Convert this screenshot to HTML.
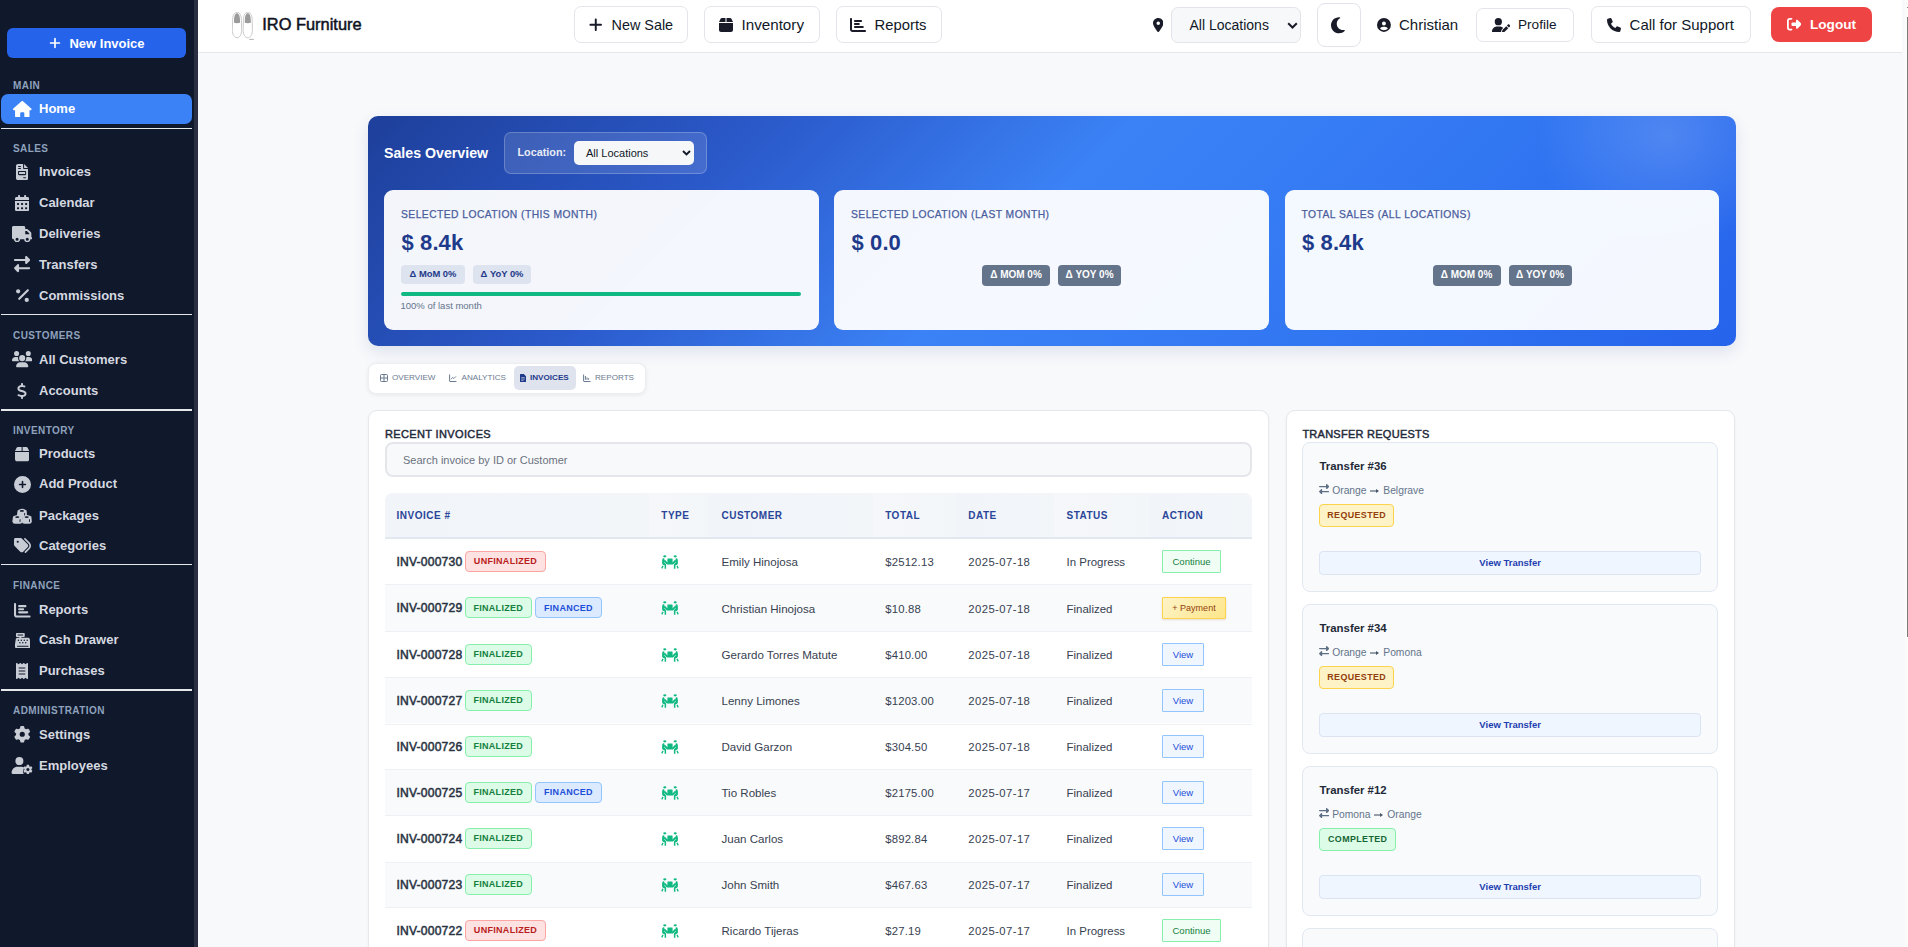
<!DOCTYPE html><html><head><meta charset="utf-8"><style>
*{box-sizing:border-box;margin:0;padding:0}
html,body{width:1908px;height:947px;overflow:hidden;background:#f8f9fb;font-family:"Liberation Sans", sans-serif}
.abs{position:absolute}
#sb{position:absolute;left:0;top:0;width:194px;height:947px;background:#10182b}
#sbtrack{position:absolute;left:194px;top:0;width:4px;height:947px;background:#2a2f42}
.sbl{position:absolute;left:13px;font-size:10px;font-weight:700;letter-spacing:.42px;color:#8ea2bd;line-height:12px}
.sbi{position:absolute;left:1px;width:191px;height:30px;color:#d5d9e0;font-size:13px;font-weight:700;line-height:30px}
.sbi .ic{position:absolute;left:10.3px;top:0;height:30px;width:22px;display:flex;align-items:center;justify-content:center;color:#c7ccd5}
.sbi .tx{position:absolute;left:38px;top:0}
.sep{position:absolute;left:1px;width:191px;height:1.6px;background:#e5e7eb}
#top{position:absolute;left:198px;top:0;width:1704px;height:53px;background:#fff;border-bottom:1px solid #e5e7eb}
.tbtn{position:absolute;height:36px;border:1px solid #e2e4e9;border-radius:7px;background:#fff;color:#111827;font-size:14.4px;display:flex;align-items:center}
</style></head><body>
<div id="sb">
<div class="abs" style="left:7px;top:28px;width:179px;height:30px;background:#2563eb;border-radius:6px;color:#fff;font-size:13px;font-weight:700;display:flex;align-items:center;justify-content:center;gap:8px;padding-left:1px"><svg width="12" height="12" viewBox="0 0 16 16" style="display:block;"><path d="M8 2v12M2 8h12" stroke="currentColor" stroke-width="2.2" stroke-linecap="round"/></svg><span>New Invoice</span></div>
<div class="sbl" style="top:79.5px">MAIN</div>
<div class="sbi" style="top:94px;background:#3b82f6;border-radius:7px;color:#fff;"><div class="ic" style="color:#fff;"><svg width="18.56" height="16.5" viewBox="0 0 576 512" style="display:block;"><path d="M575.8 255.5c0 18-15 32.1-32 32.1h-32l.7 160.2c0 2.7-.2 5.4-.5 8.1V472c0 22.1-17.9 40-40 40H456c-1.1 0-2.2 0-3.3-.1c-1.4 .1-2.8 .1-4.2 .1H416 392c-22.1 0-40-17.9-40-40V448 384c0-17.7-14.3-32-32-32H256c-17.7 0-32 14.3-32 32v64 24c0 22.1-17.9 40-40 40H160 128.1c-1.5 0-3-.1-4.5-.2c-1.2 .1-2.4 .2-3.6 .2H104c-22.1 0-40-17.9-40-40V360c0-.9 0-1.9 .1-2.8V287.6H32c-18 0-32-14-32-32.1c0-9 3-17 10-24L266.4 8c7-7 15-8 22-8s15 2 21 7L564.8 231.5c8 7 12 15 11 24z" fill="currentColor"/></svg></div><div class="tx">Home</div></div>
<div class="sep" style="top:127.7px"></div>
<div class="sbl" style="top:143px">SALES</div>
<div class="sbi" style="top:157px;"><div class="ic" style=""><svg width="12.15" height="16.2" viewBox="0 0 384 512" style="display:block;"><path d="M64 0C28.7 0 0 28.7 0 64V448c0 35.3 28.7 64 64 64H320c35.3 0 64-28.7 64-64V160H256c-17.7 0-32-14.3-32-32V0H64zM256 0V128H384L256 0zM80 64h64c8.8 0 16 7.2 16 16s-7.2 16-16 16H80c-8.8 0-16-7.2-16-16s7.2-16 16-16zm0 64h64c8.8 0 16 7.2 16 16s-7.2 16-16 16H80c-8.8 0-16-7.2-16-16s7.2-16 16-16zm16 96H288c17.7 0 32 14.3 32 32v64c0 17.7-14.3 32-32 32H96c-17.7 0-32-14.3-32-32V256c0-17.7 14.3-32 32-32zm0 32v64H288V256H96zM240 416h64c8.8 0 16 7.2 16 16s-7.2 16-16 16H240c-8.8 0-16-7.2-16-16s7.2-16 16-16z" fill="currentColor"/></svg></div><div class="tx">Invoices</div></div>
<div class="sbi" style="top:188px;"><div class="ic" style=""><svg width="14.17" height="16.2" viewBox="0 0 448 512" style="display:block;"><path d="M128 0c17.7 0 32 14.3 32 32V64H288V32c0-17.7 14.3-32 32-32s32 14.3 32 32V64h48c26.5 0 48 21.5 48 48v48H0V112C0 85.5 21.5 64 48 64H96V32c0-17.7 14.3-32 32-32zM0 192H448V464c0 26.5-21.5 48-48 48H48c-26.5 0-48-21.5-48-48V192zm64 80v32c0 8.8 7.2 16 16 16h32c8.8 0 16-7.2 16-16V272c0-8.8-7.2-16-16-16H80c-8.8 0-16 7.2-16 16zm128 0v32c0 8.8 7.2 16 16 16h32c8.8 0 16-7.2 16-16V272c0-8.8-7.2-16-16-16H208c-8.8 0-16 7.2-16 16zm144-16c-8.8 0-16 7.2-16 16v32c0 8.8 7.2 16 16 16h32c8.8 0 16-7.2 16-16V272c0-8.8-7.2-16-16-16H336zM64 400v32c0 8.8 7.2 16 16 16h32c8.8 0 16-7.2 16-16V400c0-8.8-7.2-16-16-16H80c-8.8 0-16 7.2-16 16zm144-16c-8.8 0-16 7.2-16 16v32c0 8.8 7.2 16 16 16h32c8.8 0 16-7.2 16-16V400c0-8.8-7.2-16-16-16H208zm112 16v32c0 8.8 7.2 16 16 16h32c8.8 0 16-7.2 16-16V400c0-8.8-7.2-16-16-16H336c-8.8 0-16 7.2-16 16z" fill="currentColor"/></svg></div><div class="tx">Calendar</div></div>
<div class="sbi" style="top:219px;"><div class="ic" style=""><svg width="20.38" height="16.3" viewBox="0 0 640 512" style="display:block;"><path d="M48 0C21.5 0 0 21.5 0 48V368c0 26.5 21.5 48 48 48H64c0 53 43 96 96 96s96-43 96-96H384c0 53 43 96 96 96s96-43 96-96h32c17.7 0 32-14.3 32-32s-14.3-32-32-32V288 256 237.3c0-17-6.7-33.3-18.7-45.3L512 114.7c-12-12-28.3-18.7-45.3-18.7H416V48c0-26.5-21.5-48-48-48H48zM416 160h50.7L544 237.3V256H416V160zM112 416a48 48 0 1 1 96 0 48 48 0 1 1 -96 0zm368-48a48 48 0 1 1 0 96 48 48 0 1 1 0-96z" fill="currentColor"/></svg></div><div class="tx">Deliveries</div></div>
<div class="sbi" style="top:249.5px;"><div class="ic" style=""><svg width="16.2" height="16.2" viewBox="0 0 512 512" style="display:block;"><path d="M32 96l320 0V32c0-12.9 7.8-24.6 19.8-29.6s25.7-2.2 34.9 6.9l96 96c6 6 9.4 14.1 9.4 22.6s-3.4 16.6-9.4 22.6l-96 96c-9.200 9.2-22.9 11.9-34.9 6.9s-19.8-16.6-19.8-29.6V160L32 160c-17.7 0-32-14.3-32-32s14.3-32 32-32zM480 352c17.7 0 32 14.3 32 32s-14.3 32-32 32H160v64c0 12.9-7.8 24.6-19.8 29.6s-25.7 2.2-34.9-6.9l-96-96c-6-6-9.4-14.1-9.4-22.6s3.4-16.6 9.4-22.6l96-96c9.2-9.2 22.9-11.9 34.9-6.9s19.8 16.6 19.8 29.6l0 64H480z" fill="currentColor"/></svg></div><div class="tx">Transfers</div></div>
<div class="sbi" style="top:280.5px;"><div class="ic" style=""><svg width="12.9" height="17.2" viewBox="0 0 384 512" style="display:block;"><path d="M374.6 118.6c12.5-12.5 12.5-32.8 0-45.3s-32.8-12.5-45.3 0l-256 256c-12.5 12.5-12.5 32.8 0 45.3s32.8 12.5 45.3 0l256-256zM128 128A64 64 0 1 0 0 128a64 64 0 1 0 128 0zM384 384a64 64 0 1 0 -128 0 64 64 0 1 0 128 0z" fill="currentColor"/></svg></div><div class="tx">Commissions</div></div>
<div class="sep" style="top:313.7px"></div>
<div class="sbl" style="top:329.5px">CUSTOMERS</div>
<div class="sbi" style="top:344.5px;"><div class="ic" style=""><svg width="20.38" height="16.3" viewBox="0 0 640 512" style="display:block;"><path d="M144 0a80 80 0 1 1 0 160A80 80 0 1 1 144 0zM512 0a80 80 0 1 1 0 160A80 80 0 1 1 512 0zM0 298.7C0 239.8 47.8 192 106.7 192h42.7c15.9 0 31 3.5 44.6 9.7c-1.3 7.2-1.9 14.7-1.9 22.3c0 38.2 16.8 72.5 43.3 96c-.2 0-.4 0-.7 0H21.3C9.6 320 0 310.4 0 298.7zM405.3 320c-.2 0-.4 0-.7 0c26.6-23.5 43.3-57.8 43.3-96c0-7.6-.7-15-1.9-22.3c13.6-6.3 28.7-9.7 44.6-9.7h42.7C592.2 192 640 239.8 640 298.7c0 11.8-9.6 21.3-21.3 21.3H405.3zM224 224a96 96 0 1 1 192 0 96 96 0 1 1 -192 0zM128 485.3C128 411.7 187.7 352 261.3 352H378.7C452.3 352 512 411.7 512 485.3c0 14.7-11.9 26.7-26.7 26.7H154.7c-14.7 0-26.7-11.9-26.7-26.7z" fill="currentColor"/></svg></div><div class="tx">All Customers</div></div>
<div class="sbi" style="top:375.5px;"><div class="ic" style=""><svg width="10.0" height="16" viewBox="0 0 320 512" style="display:block;"><path d="M160 0c17.7 0 32 14.3 32 32V67.7c1.6 .2 3.1 .4 4.7 .7c.4 .1 .7 .1 1.1 .2l48 8.8c17.4 3.2 28.9 19.900 25.7 37.2s-19.9 28.9-37.2 25.7l-47.5-8.7c-31.3-4.6-58.9-1.5-78.3 6.2s-27.2 18.3-29 28.1c-2 10.7-.5 16.7 1.2 20.4c1.8 3.9 5.5 8.3 12.8 13.2c16.3 10.7 41.3 17.7 73.7 26.3l2.9 .8c28.6 7.6 63.6 16.8 89.6 33.8c14.2 9.3 27.6 21.9 35.9 39.5c8.5 17.9 10.3 37.9 6.4 59.2c-6.9 38-33.1 63.4-65.6 76.7c-13.7 5.6-28.6 9.2-44.4 11V480c0 17.7-14.3 32-32 32s-32-14.3-32-32V445.1c-.4-.1-.9-.1-1.3-.2l-.2 0 0 0c-24.4-3.800-64.5-14.3-91.5-26.3c-16.1-7.2-23.4-26.1-16.2-42.2s26.1-23.4 42.2-16.2c20.9 9.3 55.3 18.5 75.2 21.6c31.9 4.7 58.2 2 76-5.3c16.9-6.9 24.6-16.9 26.8-28.9c1.9-10.6 .4-16.7-1.3-20.4c-1.9-4-5.6-8.4-13-13.3c-16.4-10.7-41.5-17.7-74-26.3l-2.8-.7 0 0C119.4 279.3 84.4 270 58.4 253c-14.2-9.3-27.5-22-35.8-39.6c-8.4-17.9-10.1-37.9-6.1-59.2C23.7 116 52.3 91.2 84.8 78.3c13.3-5.3 27.9-8.9 43.2-11V32c0-17.7 14.3-32 32-32z" fill="currentColor"/></svg></div><div class="tx">Accounts</div></div>
<div class="sep" style="top:409.2px"></div>
<div class="sbl" style="top:424.5px">INVENTORY</div>
<div class="sbi" style="top:438.7px;"><div class="ic" style=""><svg width="14.26" height="16.3" viewBox="0 0 448 512" style="display:block;"><path d="M50.7 58.5L0 160H208V32H93.7C75.5 32 58.9 42.3 50.7 58.5zM240 160H448L397.3 58.5C389.1 42.3 372.5 32 354.3 32H240V160zm208 32H0V416c0 35.3 28.7 64 64 64H384c35.3 0 64-28.7 64-64V192z" fill="currentColor"/></svg></div><div class="tx">Products</div></div>
<div class="sbi" style="top:469px;"><div class="ic" style=""><svg width="17.0" height="17" viewBox="0 0 512 512" style="display:block;"><path d="M256 512A256 256 0 1 0 256 0a256 256 0 1 0 0 512zM232 344V280H168c-13.3 0-24-10.7-24-24s10.7-24 24-24h64V168c0-13.3 10.7-24 24-24s24 10.7 24 24v64h64c13.3 0 24 10.7 24 24s-10.7 24-24 24H280v64c0 13.3-10.7 24-24 24s-24-10.7-24-24z" fill="currentColor"/></svg></div><div class="tx">Add Product</div></div>
<div class="sbi" style="top:500.5px;"><div class="ic" style=""><svg width="20" height="16" viewBox="0 0 20 16" style="display:block;"><path d="M5.6 2.4000000000000004Q10.1 -0.8 14.6 2.4000000000000004L15.0 7.2Q14.799999999999999 9.399999999999999 12.6 9.6L7.6 9.6Q5.199999999999999 9.399999999999999 5.0 7.2Z" fill="currentColor"/><ellipse cx="9.899999999999999" cy="2.9000000000000004" rx="2.1" ry=".85" fill="#10182b"/><path d="M12.2 5.2l.9-.5v2.8l-.9.5z" fill="#10182b"/><path d="M1 8.600000000000001Q5.5 5.4 10 8.600000000000001L10.4 13.4Q10.2 15.6 8 15.8L3 15.8Q0.6 15.6 0.4 13.4Z" fill="currentColor"/><ellipse cx="5.3" cy="9.100000000000001" rx="2.1" ry=".85" fill="#10182b"/><path d="M7.6 11.4l.9-.5v2.8l-.9.5z" fill="#10182b"/><path d="M10.4 8.600000000000001Q14.9 5.4 19.4 8.600000000000001L19.8 13.4Q19.6 15.6 17.4 15.8L12.4 15.8Q10.0 15.6 9.8 13.4Z" fill="currentColor"/><ellipse cx="14.7" cy="9.100000000000001" rx="2.1" ry=".85" fill="#10182b"/><path d="M17.0 11.4l.9-.5v2.8l-.9.5z" fill="#10182b"/></svg></div><div class="tx">Packages</div></div>
<div class="sbi" style="top:530.5px;"><div class="ic" style=""><svg width="17.0" height="17" viewBox="0 0 512 512" style="display:block;"><path d="M345 39.1L472.8 168.4c52.4 53 52.4 138.2 0 191.2L360.8 472.9c-9.3 9.4-24.5 9.5-33.9 .2s-9.5-24.5-.2-33.9L438.6 325.9c33.9-34.3 33.9-89.4 0-123.7L310.9 72.9c-9.3-9.4-9.2-24.6 .2-33.9s24.6-9.2 33.9 .2zM0 229.5V80C0 53.5 21.5 32 48 32H197.5c17 0 33.3 6.7 45.3 18.7l168 168c25 25 25 65.5 0 90.5L277.3 442.7c-25 25-65.5 25-90.5 0l-168-168C6.7 262.7 0 246.5 0 229.5zM144 144a32 32 0 1 0 -64 0 32 32 0 1 0 64 0z" fill="currentColor"/></svg></div><div class="tx">Categories</div></div>
<div class="sep" style="top:563.7px"></div>
<div class="sbl" style="top:579.5px">FINANCE</div>
<div class="sbi" style="top:594.8px;"><div class="ic" style=""><svg width="16.6" height="16.6" viewBox="0 0 512 512" style="display:block;"><path d="M32 32c17.7 0 32 14.3 32 32V400c0 8.8 7.2 16 16 16H480c17.7 0 32 14.3 32 32s-14.3 32-32 32H80c-44.2 0-80-35.8-80-80V64C0 46.3 14.3 32 32 32zm96 96c0-17.7 14.3-32 32-32l192 0c17.7 0 32 14.3 32 32s-14.3 32-32 32l-192 0c-17.7 0-32-14.3-32-32zm32 64H280c17.7 0 32 14.3 32 32s-14.3 32-32 32H160c-17.7 0-32-14.3-32-32s14.3-32 32-32zm0 96H408c17.7 0 32 14.3 32 32s-14.3 32-32 32H160c-17.7 0-32-14.3-32-32s14.3-32 32-32z" fill="currentColor"/></svg></div><div class="tx">Reports</div></div>
<div class="sbi" style="top:625.3px;"><div class="ic" style=""><svg width="15.6" height="15.6" viewBox="0 0 512 512" style="display:block;"><path d="M64 0C46.3 0 32 14.3 32 32V96c0 17.7 14.3 32 32 32h80v32H87c-31.6 0-58.5 23.1-63.3 54.4L1.1 364.1C.4 368.8 0 373.6 0 378.4V448c0 35.3 28.7 64 64 64H448c35.3 0 64-28.7 64-64V378.4c0-4.8-.4-9.6-1.1-14.4L488.2 214.4C483.5 183.1 456.6 160 425 160H208V128h80c17.7 0 32-14.3 32-32V32c0-17.7-14.3-32-32-32H64zM96 48H256c8.8 0 16 7.2 16 16s-7.2 16-16 16H96c-8.8 0-16-7.2-16-16s7.2-16 16-16zM64 432c0-8.8 7.2-16 16-16H432c8.8 0 16 7.2 16 16s-7.2 16-16 16H80c-8.8 0-16-7.2-16-16zm48-168a24 24 0 1 1 0-48 24 24 0 1 1 0 48zm120-24a24 24 0 1 1 -48 0 24 24 0 1 1 48 0zM160 344a24 24 0 1 1 0-48 24 24 0 1 1 0 48zM328 240a24 24 0 1 1 -48 0 24 24 0 1 1 48 0zM256 344a24 24 0 1 1 0-48 24 24 0 1 1 0 48zM424 240a24 24 0 1 1 -48 0 24 24 0 1 1 48 0zM352 344a24 24 0 1 1 0-48 24 24 0 1 1 0 48z" fill="currentColor"/></svg></div><div class="tx">Cash Drawer</div></div>
<div class="sbi" style="top:655.8px;"><div class="ic" style=""><svg width="12.0" height="16" viewBox="0 0 384 512" style="display:block;"><path d="M14 2.2C22.5-1.7 32.5-.3 39.6 5.8L80 40.4 120.4 5.8c9-7.7 22.3-7.7 31.2 0L192 40.4 232.4 5.8c9-7.7 22.3-7.7 31.2 0L304 40.4 344.4 5.8c7.1-6.1 17.1-7.5 25.6-3.6s14 12.4 14 21.8V488c0 9.4-5.5 17.9-14 21.8s-18.5 2.5-25.6-3.6L304 471.6l-40.4 34.6c-9 7.7-22.3 7.7-31.2 0L192 471.6l-40.4 34.6c-9 7.7-22.3 7.7-31.2 0L80 471.6 39.6 506.2c-7.1 6.1-17.1 7.5-25.6 3.6S0 497.4 0 488V24C0 14.6 5.5 6.1 14 2.2zM96 144c-8.8 0-16 7.2-16 16s7.2 16 16 16H288c8.8 0 16-7.2 16-16s-7.2-16-16-16H96zM80 352c0 8.8 7.2 16 16 16H288c8.8 0 16-7.2 16-16s-7.2-16-16-16H96c-8.8 0-16 7.2-16 16zM96 240c-8.8 0-16 7.2-16 16s7.2 16 16 16H288c8.8 0 16-7.2 16-16s-7.2-16-16-16H96z" fill="currentColor"/></svg></div><div class="tx">Purchases</div></div>
<div class="sep" style="top:689.2px"></div>
<div class="sbl" style="top:705px">ADMINISTRATION</div>
<div class="sbi" style="top:719.7px;"><div class="ic" style=""><svg width="16.5" height="16.5" viewBox="0 0 512 512" style="display:block;"><path d="M495.9 166.6c3.2 8.7 .5 18.4-6.4 24.6l-43.3 39.4c1.1 8.3 1.7 16.8 1.7 25.4s-.6 17.1-1.7 25.4l43.3 39.4c6.9 6.2 9.6 15.9 6.4 24.6c-4.4 11.9-9.7 23.3-15.8 34.3l-4.7 8.1c-6.6 11-14 21.4-22.1 31.2c-5.9 7.2-15.7 9.6-24.5 6.8l-55.7-17.7c-13.4 10.3-28.2 18.9-44 25.4l-12.5 57.1c-2 9.1-9 16.3-18.2 17.8c-13.8 2.3-28 3.5-42.5 3.5s-28.7-1.2-42.5-3.5c-9.2-1.5-16.2-8.7-18.2-17.8l-12.5-57.1c-15.8-6.5-30.6-15.1-44-25.4L83.1 425.9c-8.8 2.8-18.6 .3-24.5-6.8c-8.1-9.8-15.5-20.2-22.1-31.2l-4.7-8.1c-6.1-11-11.4-22.4-15.8-34.3c-3.2-8.7-.5-18.4 6.4-24.6l43.3-39.4C64.6 273.1 64 264.6 64 256s.6-17.1 1.7-25.4L22.4 191.2c-6.9-6.2-9.6-15.9-6.4-24.6c4.4-11.9 9.7-23.3 15.8-34.3l4.7-8.1c6.6-11 14-21.4 22.1-31.2c5.9-7.2 15.7-9.6 24.5-6.8l55.7 17.7c13.4-10.3 28.2-18.9 44-25.4l12.5-57.1c2-9.1 9-16.3 18.2-17.8C227.3 1.2 241.5 0 256 0s28.7 1.2 42.5 3.5c9.2 1.5 16.2 8.7 18.2 17.8l12.5 57.1c15.8 6.5 30.6 15.1 44 25.4l55.7-17.7c8.8-2.8 18.6-.3 24.5 6.8c8.1 9.8 15.5 20.2 22.1 31.2l4.7 8.1c6.1 11 11.4 22.4 15.8 34.3zM256 336a80 80 0 1 0 0-160 80 80 0 1 0 0 160z" fill="currentColor"/></svg></div><div class="tx">Settings</div></div>
<div class="sbi" style="top:750.8px;"><div class="ic" style=""><svg width="22" height="17" viewBox="0 0 22 17" style="display:block;"><circle cx="8.4" cy="4.1" r="4" fill="currentColor"/><path d="M0.6 15.8c0-3.3 2.6-6 5.9-6h3.8c1.2 0 2.3.3 3.2.9-.9 1-1.4 2.3-1.4 3.7 0 1 .2 1.9.7 2.6H1.6c-.6 0-1-.5-1-1.2z" fill="currentColor"/><path d="M15.57 9.16 L15.76 7.84 L18.04 7.84 L18.23 9.16 L19.04 9.63 L20.28 9.14 L21.42 11.10 L20.37 11.94 L20.37 12.86 L21.42 13.70 L20.28 15.66 L19.04 15.17 L18.23 15.64 L18.04 16.96 L15.76 16.96 L15.57 15.64 L14.76 15.17 L13.52 15.66 L12.38 13.70 L13.43 12.86 L13.43 11.94 L12.38 11.10 L13.52 9.14 L14.76 9.63Z" fill="currentColor"/><circle cx="16.9" cy="12.4" r="1.5" fill="#10182b"/></svg></div><div class="tx">Employees</div></div>
</div><div id="sbtrack"></div>
<div id="top"></div>
<div class="abs" style="left:232px;top:12px;width:22px;height:28px"><svg width="22" height="28" viewBox="0 0 22 28" style="display:block;"><path d="M0.6 8.5C0.6 2.8 2.6 0.2 5 0.2S9.4 2.8 9.4 8.5L9.6 17.5C9.6 22.8 7.6 25.8 5 25.8S0.3 22.8 0.3 17.5Z" fill="#fff" stroke="#c4c4c4" stroke-width=".9"/><path d="M2 10.8C1.8 3.6 3.2 1.2 5 1.2S8.2 3.6 8 10.8C6.5 11.4 3.5 11.4 2 10.8Z" fill="#9b9b9b"/><path d="M11.4 8.5C11.4 2.8 13.4 0.2 15.8 0.2S20.200000000000003 2.8 20.200000000000003 8.5L20.4 17.5C20.4 22.8 18.4 25.8 15.8 25.8S11.100000000000001 22.8 11.100000000000001 17.5Z" fill="#fff" stroke="#c4c4c4" stroke-width=".9"/><path d="M12.8 10.8C12.600000000000001 3.6 14.0 1.2 15.8 1.2S19.0 3.6 18.8 10.8C17.3 11.4 14.3 11.4 12.8 10.8Z" fill="#9b9b9b"/><path d="M17.2 27.4h4.6" stroke="#aaa" stroke-width=".9"/></svg></div>
<div class="abs" style="left:262.3px;top:13px;font-size:16.4px;font-weight:400;color:#0f1222;line-height:22px;-webkit-text-stroke:.5px #0f1222">IRO Furniture</div>
<div class="abs" style="left:574px;top:6px;width:114px;height:37px;border:1px solid #e3e5ea;border-radius:7px;background:#fff;"></div>
<div class="abs" style="left:588.65px;top:17.05px;color:#191c28"><svg width="13.56" height="15.5" viewBox="0 0 448 512" style="display:block;"><path d="M256 80c0-17.7-14.3-32-32-32s-32 14.3-32 32V224H48c-17.7 0-32 14.3-32 32s14.3 32 32 32H192V432c0 17.7 14.3 32 32 32s32-14.3 32-32V288H400c17.7 0 32-14.3 32-32s-14.3-32-32-32H256V80z" fill="currentColor"/></svg></div>
<div class="abs" style="left:611.5px;top:1px;height:49px;line-height:49px;font-size:14.4px;color:#111827">New Sale</div>
<div class="abs" style="left:704px;top:6px;width:116px;height:37px;border:1px solid #e3e5ea;border-radius:7px;background:#fff;"></div>
<div class="abs" style="left:719.3px;top:16.9px;color:#191c28"><svg width="14.0" height="16" viewBox="0 0 448 512" style="display:block;"><path d="M50.7 58.5L0 160H208V32H93.7C75.5 32 58.9 42.3 50.7 58.5zM240 160H448L397.3 58.5C389.1 42.3 372.5 32 354.3 32H240V160zm208 32H0V416c0 35.3 28.7 64 64 64H384c35.3 0 64-28.7 64-64V192z" fill="currentColor"/></svg></div>
<div class="abs" style="left:741.5px;top:0px;height:49px;line-height:49px;font-size:15.2px;color:#111827">Inventory</div>
<div class="abs" style="left:836px;top:6px;width:106px;height:37px;border:1px solid #e3e5ea;border-radius:7px;background:#fff;"></div>
<div class="abs" style="left:850.1px;top:16.9px;color:#191c28"><svg width="16.0" height="16" viewBox="0 0 512 512" style="display:block;"><path d="M32 32c17.7 0 32 14.3 32 32V400c0 8.8 7.2 16 16 16H480c17.7 0 32 14.3 32 32s-14.3 32-32 32H80c-44.2 0-80-35.8-80-80V64C0 46.3 14.3 32 32 32zm96 96c0-17.7 14.3-32 32-32l192 0c17.7 0 32 14.3 32 32s-14.3 32-32 32l-192 0c-17.7 0-32-14.3-32-32zm32 64H280c17.7 0 32 14.3 32 32s-14.3 32-32 32H160c-17.7 0-32-14.3-32-32s14.3-32 32-32zm0 96H408c17.7 0 32 14.3 32 32s-14.3 32-32 32H160c-17.7 0-32-14.3-32-32s14.3-32 32-32z" fill="currentColor"/></svg></div>
<div class="abs" style="left:874.6px;top:0.5px;height:49px;line-height:49px;font-size:14.8px;color:#111827">Reports</div>
<div class="abs" style="left:1152.5px;top:17.8px;color:#191c28"><svg width="10.5" height="14" viewBox="0 0 384 512" style="display:block;"><path d="M215.7 499.2C267 435 384 279.4 384 192C384 86 298 0 192 0S0 86 0 192c0 87.4 117 243 168.3 307.2c12.3 15.3 35.1 15.3 47.4 0zM192 128a64 64 0 1 1 0 128 64 64 0 1 1 0-128z" fill="currentColor"/></svg></div>
<div class="abs" style="left:1171px;top:7px;width:130px;height:36px;border:1px solid #e2e4e9;border-radius:7px;background:#f7f8fa"></div>
<div class="abs" style="left:1189.5px;top:7px;height:36px;line-height:36px;font-size:14px;color:#111827">All Locations</div>
<div class="abs" style="left:1286.5px;top:22px;color:#191c28"><svg width="11" height="7" viewBox="0 0 11 7" style="display:block;"><path d="M1.2 1.2l4.3 4.3 4.3-4.3" fill="none" stroke="currentColor" stroke-width="2"/></svg></div>
<div class="abs" style="left:1317px;top:3px;width:44px;height:44px;border:1px solid #e2e4e9;border-radius:8px;background:#fff"></div>
<div class="abs" style="left:1331px;top:15.75px;color:#191c28"><svg width="13.8" height="18.4" viewBox="0 0 384 512" style="display:block;"><path d="M223.5 32C100 32 0 132.3 0 256S100 480 223.5 480c60.6 0 115.5-24.2 155.8-63.4c5-4.9 6.3-12.5 3.1-18.7s-10.1-9.7-17-8.5c-9.8 1.7-19.8 2.6-30.1 2.6c-96.9 0-175.5-78.8-175.5-176c0-65.8 36-123.1 89.3-153.3c6.1-3.5 9.2-10.5 7.7-17.3s-7.3-11.9-14.3-12.5c-6.3-.5-12.6-.8-19-.8z" fill="currentColor"/></svg></div>
<div class="abs" style="left:1377px;top:18px;color:#191c28"><svg width="13.9" height="13.9" viewBox="0 0 512 512" style="display:block;"><path d="M399 384.2C376.9 345.8 335.4 320 288 320H224c-47.4 0-88.9 25.8-111 64.2c35.2 39.2 86.2 63.8 143 63.8s107.8-24.7 143-63.8zM0 256a256 256 0 1 1 512 0A256 256 0 1 1 0 256zm256 16a72 72 0 1 0 0-144 72 72 0 1 0 0 144z" fill="currentColor"/></svg></div>
<div class="abs" style="left:1399px;top:0;height:49px;line-height:49px;font-size:15px;color:#111827">Christian</div>
<div class="abs" style="left:1475.5px;top:8.4px;width:98px;height:33.5px;border:1px solid #e3e5ea;border-radius:7px;background:#fff;"></div>
<div class="abs" style="left:1491.7px;top:17.6px;color:#191c28"><svg width="18.12" height="14.5" viewBox="0 0 640 512" style="display:block;"><path d="M224 256A128 128 0 1 0 224 0a128 128 0 1 0 0 256zm-45.7 48C79.8 304 0 383.8 0 482.3C0 498.7 13.3 512 29.7 512H322.8c-3.1-8.8-3.7-18.4-1.4-27.8l15-60.1c2.8-11.3 8.6-21.5 16.8-29.7l40.3-40.3c-32.1-31-75.7-50.1-123.9-50.1H178.3zm435.5-68.3c-15.6-15.6-40.9-15.6-56.6 0l-29.4 29.4 71 71 29.4-29.4c15.6-15.6 15.6-40.9 0-56.6l-14.4-14.4zM375.9 417c-4.1 4.1-7 9.2-8.4 14.9l-15 60.1c-1.4 5.5 .2 11.2 4.2 15.2s9.7 5.6 15.2 4.2l60.1-15c5.6-1.4 10.8-4.3 14.9-8.4L576.1 358.7l-71-71L375.9 417z" fill="currentColor"/></svg></div>
<div class="abs" style="left:1518px;top:0px;height:49px;line-height:49px;font-size:13.6px;color:#111827">Profile</div>
<div class="abs" style="left:1590.5px;top:6.4px;width:160px;height:36.4px;border:1px solid #e3e5ea;border-radius:7px;background:#fff;"></div>
<div class="abs" style="left:1606.7px;top:18px;color:#191c28"><svg width="14.0" height="14" viewBox="0 0 512 512" style="display:block;"><path d="M164.9 24.6c-7.7-18.6-28-28.5-47.4-23.2l-88 24C12.1 30.2 0 46 0 64C0 311.4 200.6 512 448 512c18 0 33.8-12.1 38.6-29.5l24-88c5.3-19.4-4.6-39.7-23.2-47.4l-96-40c-16.3-6.8-35.2-2.1-46.3 11.6L304.7 368C234.3 334.7 177.3 277.700 144 207.3L193.3 167c13.7-11.2 18.4-30 11.6-46.3l-40-96z" fill="currentColor"/></svg></div>
<div class="abs" style="left:1629.6px;top:0px;height:49px;line-height:49px;font-size:15px;color:#111827">Call for Support</div>
<div class="abs" style="left:1771px;top:7px;width:101px;height:35px;border-radius:8px;background:#ef4444"></div>
<div class="abs" style="left:1787px;top:17.3px;color:#fff"><svg width="14.4" height="14.4" viewBox="0 0 512 512" style="display:block;"><path d="M377.9 105.9L500.7 228.7c7.2 7.2 11.3 17.1 11.3 27.3s-4.1 20.1-11.3 27.3L377.9 406.1c-6.4 6.4-15 9.9-24 9.9c-18.7 0-33.9-15.2-33.9-33.9l0-62.1-128 0c-17.7 0-32-14.3-32-32l0-64c0-17.7 14.3-32 32-32l128 0 0-62.1c0-18.7 15.2-33.9 33.9-33.9c9 0 17.6 3.6 24 9.9zM160 96L96 96c-17.7 0-32 14.3-32 32l0 256c0 17.7 14.3 32 32 32l64 0c17.7 0 32 14.3 32 32s-14.3 32-32 32l-64 0c-53 0-96-43-96-96L0 128C0 75 43 32 96 32l64 0c17.7 0 32 14.3 32 32s-14.3 32-32 32z" fill="currentColor"/></svg></div>
<div class="abs" style="left:1810px;top:0;height:49px;line-height:49px;font-size:13.6px;font-weight:700;color:#fff">Logout</div>
<div class="abs" style="left:368px;top:116px;width:1368px;height:230px;border-radius:10px;background:linear-gradient(135deg,#1e3f9a 0%,#2b5acb 26%,#3b82f6 48%,#3277f2 72%,#2563eb 100%);box-shadow:0 6px 16px rgba(30,58,138,.12);overflow:hidden"><div style="position:absolute;right:-60px;top:-90px;width:260px;height:220px;border-radius:50%;background:radial-gradient(closest-side,rgba(255,255,255,.16),rgba(255,255,255,0))"></div></div>
<div class="abs" style="left:384px;top:143px;font-size:14.2px;font-weight:700;color:#fff;line-height:20px">Sales Overview</div>
<div class="abs" style="left:504px;top:132px;width:203px;height:42px;border-radius:7px;background:rgba(255,255,255,.12);border:1px solid rgba(255,255,255,.22)"></div>
<div class="abs" style="left:517.5px;top:144px;font-size:10.8px;font-weight:700;color:#e8ecf5;line-height:16px">Location:</div>
<div class="abs" style="left:574px;top:141px;width:120px;height:24px;border-radius:5px;background:#f6f7f9"></div>
<div class="abs" style="left:586px;top:145px;font-size:11px;color:#111827;line-height:16px">All Locations</div>
<div class="abs" style="left:681.5px;top:150px;color:#111827"><svg width="9" height="6" viewBox="0 0 9 6" style="display:block;"><path d="M1 1l3.5 3.5L8 1" fill="none" stroke="currentColor" stroke-width="1.9"/></svg></div>
<div class="abs" style="left:384px;top:190px;width:434.5px;height:140px;border-radius:9px;background:rgba(255,255,255,.95)"></div>
<div class="abs" style="left:401px;top:208px;font-size:10.3px;letter-spacing:.45px;color:#4a5d9c;line-height:14px;-webkit-text-stroke:.25px #4a5d9c">SELECTED LOCATION (THIS MONTH)</div>
<div class="abs" style="left:401.5px;top:229.8px;font-size:22px;font-weight:700;color:#1e3a8a;line-height:26px;letter-spacing:.1px">$ 8.4k</div>
<div class="abs" style="left:401px;top:265px;width:64px;height:18.5px;border-radius:4px;background:#dde3ef;color:#1e3a8a;font-size:9.4px;font-weight:700;line-height:18.5px;text-align:center">Δ MoM 0%</div>
<div class="abs" style="left:473px;top:265px;width:58px;height:18.5px;border-radius:4px;background:#dde3ef;color:#1e3a8a;font-size:9.4px;font-weight:700;line-height:18.5px;text-align:center">Δ YoY 0%</div>
<div class="abs" style="left:401px;top:292px;width:400px;height:4px;border-radius:2px;background:#10b981"></div>
<div class="abs" style="left:400.5px;top:299px;font-size:9.5px;color:#64748b;line-height:13px">100% of last month</div>
<div class="abs" style="left:834px;top:190px;width:434.5px;height:140px;border-radius:9px;background:rgba(255,255,255,.95)"></div>
<div class="abs" style="left:851px;top:208px;font-size:10.3px;letter-spacing:.45px;color:#4a5d9c;line-height:14px;-webkit-text-stroke:.25px #4a5d9c">SELECTED LOCATION (LAST MONTH)</div>
<div class="abs" style="left:851.5px;top:229.8px;font-size:22px;font-weight:700;color:#1e3a8a;line-height:26px;letter-spacing:.1px">$ 0.0</div>
<div class="abs" style="left:982px;top:265px;width:68px;height:21px;border-radius:4px;background:#64748b;color:#fff;font-size:10px;font-weight:700;line-height:20px;text-align:center">Δ MOM 0%</div>
<div class="abs" style="left:1058px;top:265px;width:63px;height:21px;border-radius:4px;background:#64748b;color:#fff;font-size:10px;font-weight:700;line-height:20px;text-align:center">Δ YOY 0%</div>
<div class="abs" style="left:1284.5px;top:190px;width:434.5px;height:140px;border-radius:9px;background:rgba(255,255,255,.95)"></div>
<div class="abs" style="left:1301.5px;top:208px;font-size:10.3px;letter-spacing:.45px;color:#4a5d9c;line-height:14px;-webkit-text-stroke:.25px #4a5d9c">TOTAL SALES (ALL LOCATIONS)</div>
<div class="abs" style="left:1302.0px;top:229.8px;font-size:22px;font-weight:700;color:#1e3a8a;line-height:26px;letter-spacing:.1px">$ 8.4k</div>
<div class="abs" style="left:1432.5px;top:265px;width:68px;height:21px;border-radius:4px;background:#64748b;color:#fff;font-size:10px;font-weight:700;line-height:20px;text-align:center">Δ MOM 0%</div>
<div class="abs" style="left:1508.5px;top:265px;width:63px;height:21px;border-radius:4px;background:#64748b;color:#fff;font-size:10px;font-weight:700;line-height:20px;text-align:center">Δ YOY 0%</div>
<div class="abs" style="left:368px;top:362.5px;width:278px;height:31px;border-radius:8px;background:#fff;border:1px solid #eceef2;box-shadow:0 1px 4px rgba(15,23,42,.08)"></div>
<div class="abs" style="left:514px;top:366px;width:62px;height:24px;border-radius:5px;background:#dfe3ee"></div>
<div class="abs" style="left:380px;top:374px;color:#6b7a90"><svg width="8" height="8" viewBox="0 0 8 8" style="display:block;"><rect x=".5" y=".5" width="7" height="7" rx="1" fill="none" stroke="currentColor" stroke-width="1"/><path d="M.5 4h7M4 .5v7" stroke="currentColor" stroke-width="1"/></svg></div>
<div class="abs" style="left:392px;top:372px;font-size:8.1px;color:#6b7a90;line-height:11px">OVERVIEW</div>
<div class="abs" style="left:449px;top:374px;color:#6b7a90"><svg width="8" height="8" viewBox="0 0 8 8" style="display:block;"><path d="M.6 .5v6.6c0 .2.2.4.4.4h6.5" fill="none" stroke="currentColor" stroke-width="1"/><path d="M2 5.2l1.6-1.8 1.3 1.1L7 2.4" fill="none" stroke="currentColor" stroke-width=".9"/></svg></div>
<div class="abs" style="left:461.5px;top:372px;font-size:8.1px;color:#6b7a90;line-height:11px">ANALYTICS</div>
<div class="abs" style="left:520px;top:374px;color:#1e3a8a"><svg width="6" height="8" viewBox="0 0 6 8" style="display:block;"><path d="M0 .6C0 .3.3 0 .6 0h3.2L6 2.2v5.2c0 .3-.3.6-.6.6H.6C.3 8 0 7.7 0 7.4z" fill="currentColor"/><path d="M1.2 3.6h3.6M1.2 5h3.6M1.2 6.4h2.4" stroke="#dfe3ee" stroke-width=".6"/></svg></div>
<div class="abs" style="left:530px;top:372px;font-size:8.1px;color:#1e3a8a;font-weight:700;line-height:11px">INVOICES</div>
<div class="abs" style="left:582.5px;top:374px;color:#6b7a90"><svg width="8" height="8" viewBox="0 0 8 8" style="display:block;"><path d="M.6 .5v6.6c0 .2.2.4.4.4h6.5" fill="none" stroke="currentColor" stroke-width="1"/><path d="M2.4 2v3.8M4 3.4v2.4M5.6 4.2v1.6" stroke="currentColor" stroke-width="1"/></svg></div>
<div class="abs" style="left:595px;top:372px;font-size:8.1px;color:#6b7a90;line-height:11px">REPORTS</div>
<div class="abs" style="left:368px;top:410px;width:900.5px;height:560px;border-radius:9px;background:#fff;border:1px solid #e6e8ec;box-shadow:0 1px 3px rgba(15,23,42,.05)"></div>
<div class="abs" style="left:385px;top:426px;font-size:11px;font-weight:400;letter-spacing:.36px;color:#1f2a3a;line-height:16px;-webkit-text-stroke:.45px #1f2a3a">RECENT INVOICES</div>
<div class="abs" style="left:385px;top:442px;width:866.5px;height:34.5px;border-radius:8px;background:#f8f9fb;border:2px solid #e4e6ea"></div>
<div class="abs" style="left:403px;top:452px;font-size:11px;color:#6b7280;line-height:16px">Search invoice by ID or Customer</div>
<div class="abs" style="left:384.5px;top:492.5px;width:867.5px;height:45.5px;border-radius:8px 8px 0 0;background:#f3f5f9;overflow:hidden"><div style="position:absolute;left:0.0px;top:0;width:264.29999999999995px;height:45.5px;background:linear-gradient(90deg,#f1f4f8,#f3f6f9)"></div><div style="position:absolute;left:264.29999999999995px;top:0;width:60.0px;height:45.5px;background:linear-gradient(90deg,#f5f7fa,#f3f6f9)"></div><div style="position:absolute;left:324.29999999999995px;top:0;width:164.4000000000001px;height:45.5px;background:linear-gradient(90deg,#f1f4f8,#f3f6f9)"></div><div style="position:absolute;left:488.70000000000005px;top:0;width:82.79999999999995px;height:45.5px;background:linear-gradient(90deg,#f5f7fa,#f3f6f9)"></div><div style="position:absolute;left:571.5px;top:0;width:98.40000000000009px;height:45.5px;background:linear-gradient(90deg,#f1f4f8,#f3f6f9)"></div><div style="position:absolute;left:669.9000000000001px;top:0;width:95.59999999999991px;height:45.5px;background:linear-gradient(90deg,#f5f7fa,#f3f6f9)"></div><div style="position:absolute;left:765.5px;top:0;width:102px;height:45.5px;background:linear-gradient(90deg,#f1f4f8,#f3f6f9)"></div></div>
<div class="abs" style="left:384.5px;top:537.2px;width:867.5px;height:1.6px;background:#e2e8f0"></div>
<div class="abs" style="left:396.5px;top:508.5px;font-size:10px;font-weight:700;letter-spacing:.5px;color:#2a4699;line-height:14px">INVOICE #</div>
<div class="abs" style="left:661.3px;top:508.5px;font-size:10px;font-weight:700;letter-spacing:.5px;color:#2a4699;line-height:14px">TYPE</div>
<div class="abs" style="left:721.5px;top:508.5px;font-size:10px;font-weight:700;letter-spacing:.5px;color:#2a4699;line-height:14px">CUSTOMER</div>
<div class="abs" style="left:885.2px;top:508.5px;font-size:10px;font-weight:700;letter-spacing:.5px;color:#2a4699;line-height:14px">TOTAL</div>
<div class="abs" style="left:968.3px;top:508.5px;font-size:10px;font-weight:700;letter-spacing:.5px;color:#2a4699;line-height:14px">DATE</div>
<div class="abs" style="left:1066.5px;top:508.5px;font-size:10px;font-weight:700;letter-spacing:.5px;color:#2a4699;line-height:14px">STATUS</div>
<div class="abs" style="left:1162px;top:508.5px;font-size:10px;font-weight:700;letter-spacing:.5px;color:#2a4699;line-height:14px">ACTION</div>
<div class="abs" style="left:384.5px;top:538.5px;width:867.5px;height:45.6px;background:#fff;"></div>
<div class="abs" style="left:396.5px;top:553.8px;font-size:12.1px;font-weight:400;color:#283242;line-height:16px;letter-spacing:.2px;-webkit-text-stroke:.5px #283242">INV-000730</div>
<div class="abs" style="left:465px;top:550.5px;width:81px;height:21px;border-radius:4px;background:#fee2e2;border:1px solid #fca5a5;color:#b91c1c;font-size:9px;font-weight:700;letter-spacing:.3px;line-height:19px;padding-top:.8px;text-align:center">UNFINALIZED</div>
<div class="abs" style="left:660.7px;top:554.9px;color:#10b981"><svg width="18" height="14" viewBox="0 0 18 14" style="display:block;"><ellipse cx="3.8" cy="1.3" rx="1.6" ry="1.15" fill="currentColor"/><ellipse cx="14.2" cy="1.3" rx="1.6" ry="1.15" fill="currentColor"/><rect x="6.4" y="3.4" width="5.2" height="5" rx=".5" fill="currentColor"/><path d="M3.2 5.4L6.4 8.6h5.2l3.2-3.2" fill="none" stroke="currentColor" stroke-width="2" stroke-linejoin="round"/><path d="M2.5 3.3C1.4 3.5 1.1 4.8 1.1 6.2v1.7c0 .9.6 1.6 1.5 2l1 .4v3.4h1.5V9.9c0-.7-.4-1.3-1-1.7l-.7-.5V4.6c0-.8-.3-1.3-.9-1.3z" fill="currentColor"/><path d="M15.5 3.3c1.1.2 1.4 1.5 1.4 2.9v1.7c0 .9-.6 1.6-1.5 2l-1 .4v3.4h-1.5V9.9c0-.7.4-1.3 1-1.7l.7-.5V4.6c0-.8.3-1.3.9-1.3z" fill="currentColor"/><path d="M1.4 10.4L.2 12.9l1.2.8 1.2-2.6z" fill="currentColor"/><path d="M16.6 10.4l1.2 2.5-1.2.8-1.2-2.6z" fill="currentColor"/></svg></div>
<div class="abs" style="left:721.5px;top:554.1px;font-size:11.55px;color:#374151;line-height:16px;letter-spacing:0px">Emily Hinojosa</div>
<div class="abs" style="left:885.2px;top:554.1px;font-size:11.3px;color:#374151;line-height:16px;letter-spacing:0.2px">$2512.13</div>
<div class="abs" style="left:968.3px;top:554.1px;font-size:11.3px;color:#374151;line-height:16px;letter-spacing:0.42px">2025-07-18</div>
<div class="abs" style="left:1066.6px;top:554.1px;font-size:11.45px;color:#374151;line-height:16px;letter-spacing:0px">In Progress</div>
<div class="abs" style="left:1162px;top:549.7px;width:59px;height:23px;background:#f0fdf4;border:1px solid #86efac;color:#15803d;font-size:9.5px;line-height:21.5px;text-align:center;border-radius:1px">Continue</div>
<div class="abs" style="left:384.5px;top:584.1px;width:867.5px;height:47.3px;background:#f9fafb;border-top:1px solid #edf0f4"></div>
<div class="abs" style="left:396.5px;top:600.25px;font-size:12.1px;font-weight:400;color:#283242;line-height:16px;letter-spacing:.2px;-webkit-text-stroke:.5px #283242">INV-000729</div>
<div class="abs" style="left:465px;top:596.95px;width:66.5px;height:21px;border-radius:4px;background:#dcfce7;border:1px solid #86efac;color:#15803d;font-size:9px;font-weight:700;letter-spacing:.3px;line-height:19px;padding-top:.8px;text-align:center">FINALIZED</div>
<div class="abs" style="left:535.2px;top:596.95px;width:66.5px;height:21px;border-radius:4px;background:#dbeafe;border:1px solid #93c5fd;color:#1d4ed8;font-size:9px;font-weight:700;letter-spacing:.3px;line-height:19px;padding-top:.8px;text-align:center">FINANCED</div>
<div class="abs" style="left:660.7px;top:601.35px;color:#10b981"><svg width="18" height="14" viewBox="0 0 18 14" style="display:block;"><ellipse cx="3.8" cy="1.3" rx="1.6" ry="1.15" fill="currentColor"/><ellipse cx="14.2" cy="1.3" rx="1.6" ry="1.15" fill="currentColor"/><rect x="6.4" y="3.4" width="5.2" height="5" rx=".5" fill="currentColor"/><path d="M3.2 5.4L6.4 8.6h5.2l3.2-3.2" fill="none" stroke="currentColor" stroke-width="2" stroke-linejoin="round"/><path d="M2.5 3.3C1.4 3.5 1.1 4.8 1.1 6.2v1.7c0 .9.6 1.6 1.5 2l1 .4v3.4h1.5V9.9c0-.7-.4-1.3-1-1.7l-.7-.5V4.6c0-.8-.3-1.3-.9-1.3z" fill="currentColor"/><path d="M15.5 3.3c1.1.2 1.4 1.5 1.4 2.9v1.7c0 .9-.6 1.6-1.5 2l-1 .4v3.4h-1.5V9.9c0-.7.4-1.3 1-1.7l.7-.5V4.6c0-.8.3-1.3.9-1.3z" fill="currentColor"/><path d="M1.4 10.4L.2 12.9l1.2.8 1.2-2.6z" fill="currentColor"/><path d="M16.6 10.4l1.2 2.5-1.2.8-1.2-2.6z" fill="currentColor"/></svg></div>
<div class="abs" style="left:721.5px;top:600.5500000000001px;font-size:11.55px;color:#374151;line-height:16px;letter-spacing:0px">Christian Hinojosa</div>
<div class="abs" style="left:885.2px;top:600.5500000000001px;font-size:11.3px;color:#374151;line-height:16px;letter-spacing:0.2px">$10.88</div>
<div class="abs" style="left:968.3px;top:600.5500000000001px;font-size:11.3px;color:#374151;line-height:16px;letter-spacing:0.42px">2025-07-18</div>
<div class="abs" style="left:1066.6px;top:600.5500000000001px;font-size:11.45px;color:#374151;line-height:16px;letter-spacing:0px">Finalized</div>
<div class="abs" style="left:1162px;top:596.6500000000001px;width:64px;height:22px;background:linear-gradient(135deg,#fef3c7,#fde68a);border:1px solid #fcd34d;color:#92400e;font-size:9px;line-height:20px;text-align:center;border-radius:1px;box-shadow:0 1px 2px rgba(146,64,14,.15)">+ Payment</div>
<div class="abs" style="left:384.5px;top:631.4px;width:867.5px;height:45.9px;background:#fff;border-top:1px solid #edf0f4"></div>
<div class="abs" style="left:396.5px;top:646.85px;font-size:12.1px;font-weight:400;color:#283242;line-height:16px;letter-spacing:.2px;-webkit-text-stroke:.5px #283242">INV-000728</div>
<div class="abs" style="left:465px;top:643.5500000000001px;width:66.5px;height:21px;border-radius:4px;background:#dcfce7;border:1px solid #86efac;color:#15803d;font-size:9px;font-weight:700;letter-spacing:.3px;line-height:19px;padding-top:.8px;text-align:center">FINALIZED</div>
<div class="abs" style="left:660.7px;top:647.95px;color:#10b981"><svg width="18" height="14" viewBox="0 0 18 14" style="display:block;"><ellipse cx="3.8" cy="1.3" rx="1.6" ry="1.15" fill="currentColor"/><ellipse cx="14.2" cy="1.3" rx="1.6" ry="1.15" fill="currentColor"/><rect x="6.4" y="3.4" width="5.2" height="5" rx=".5" fill="currentColor"/><path d="M3.2 5.4L6.4 8.6h5.2l3.2-3.2" fill="none" stroke="currentColor" stroke-width="2" stroke-linejoin="round"/><path d="M2.5 3.3C1.4 3.5 1.1 4.8 1.1 6.2v1.7c0 .9.6 1.6 1.5 2l1 .4v3.4h1.5V9.9c0-.7-.4-1.3-1-1.7l-.7-.5V4.6c0-.8-.3-1.3-.9-1.3z" fill="currentColor"/><path d="M15.5 3.3c1.1.2 1.4 1.5 1.4 2.9v1.7c0 .9-.6 1.6-1.5 2l-1 .4v3.4h-1.5V9.9c0-.7.4-1.3 1-1.7l.7-.5V4.6c0-.8.3-1.3.9-1.3z" fill="currentColor"/><path d="M1.4 10.4L.2 12.9l1.2.8 1.2-2.6z" fill="currentColor"/><path d="M16.6 10.4l1.2 2.5-1.2.8-1.2-2.6z" fill="currentColor"/></svg></div>
<div class="abs" style="left:721.5px;top:647.1500000000001px;font-size:11.55px;color:#374151;line-height:16px;letter-spacing:0px">Gerardo Torres Matute</div>
<div class="abs" style="left:885.2px;top:647.1500000000001px;font-size:11.3px;color:#374151;line-height:16px;letter-spacing:0.2px">$410.00</div>
<div class="abs" style="left:968.3px;top:647.1500000000001px;font-size:11.3px;color:#374151;line-height:16px;letter-spacing:0.42px">2025-07-18</div>
<div class="abs" style="left:1066.6px;top:647.1500000000001px;font-size:11.45px;color:#374151;line-height:16px;letter-spacing:0px">Finalized</div>
<div class="abs" style="left:1162px;top:642.7500000000001px;width:42px;height:23px;background:#eff6ff;border:1px solid #93c5fd;color:#1d4ed8;font-size:9.5px;line-height:21.5px;text-align:center;border-radius:1px">View</div>
<div class="abs" style="left:384.5px;top:677.3px;width:867.5px;height:46.2px;background:#f9fafb;border-top:1px solid #edf0f4"></div>
<div class="abs" style="left:396.5px;top:692.9px;font-size:12.1px;font-weight:400;color:#283242;line-height:16px;letter-spacing:.2px;-webkit-text-stroke:.5px #283242">INV-000727</div>
<div class="abs" style="left:465px;top:689.6px;width:66.5px;height:21px;border-radius:4px;background:#dcfce7;border:1px solid #86efac;color:#15803d;font-size:9px;font-weight:700;letter-spacing:.3px;line-height:19px;padding-top:.8px;text-align:center">FINALIZED</div>
<div class="abs" style="left:660.7px;top:694.0px;color:#10b981"><svg width="18" height="14" viewBox="0 0 18 14" style="display:block;"><ellipse cx="3.8" cy="1.3" rx="1.6" ry="1.15" fill="currentColor"/><ellipse cx="14.2" cy="1.3" rx="1.6" ry="1.15" fill="currentColor"/><rect x="6.4" y="3.4" width="5.2" height="5" rx=".5" fill="currentColor"/><path d="M3.2 5.4L6.4 8.6h5.2l3.2-3.2" fill="none" stroke="currentColor" stroke-width="2" stroke-linejoin="round"/><path d="M2.5 3.3C1.4 3.5 1.1 4.8 1.1 6.2v1.7c0 .9.6 1.6 1.5 2l1 .4v3.4h1.5V9.9c0-.7-.4-1.3-1-1.7l-.7-.5V4.6c0-.8-.3-1.3-.9-1.3z" fill="currentColor"/><path d="M15.5 3.3c1.1.2 1.4 1.5 1.4 2.9v1.7c0 .9-.6 1.6-1.5 2l-1 .4v3.4h-1.5V9.9c0-.7.4-1.3 1-1.7l.7-.5V4.6c0-.8.3-1.3.9-1.3z" fill="currentColor"/><path d="M1.4 10.4L.2 12.9l1.2.8 1.2-2.6z" fill="currentColor"/><path d="M16.6 10.4l1.2 2.5-1.2.8-1.2-2.6z" fill="currentColor"/></svg></div>
<div class="abs" style="left:721.5px;top:693.2px;font-size:11.55px;color:#374151;line-height:16px;letter-spacing:0px">Lenny Limones</div>
<div class="abs" style="left:885.2px;top:693.2px;font-size:11.3px;color:#374151;line-height:16px;letter-spacing:0.2px">$1203.00</div>
<div class="abs" style="left:968.3px;top:693.2px;font-size:11.3px;color:#374151;line-height:16px;letter-spacing:0.42px">2025-07-18</div>
<div class="abs" style="left:1066.6px;top:693.2px;font-size:11.45px;color:#374151;line-height:16px;letter-spacing:0px">Finalized</div>
<div class="abs" style="left:1162px;top:688.8000000000001px;width:42px;height:23px;background:#eff6ff;border:1px solid #93c5fd;color:#1d4ed8;font-size:9.5px;line-height:21.5px;text-align:center;border-radius:1px">View</div>
<div class="abs" style="left:384.5px;top:723.5px;width:867.5px;height:45.9px;background:#fff;border-top:1px solid #edf0f4"></div>
<div class="abs" style="left:396.5px;top:738.95px;font-size:12.1px;font-weight:400;color:#283242;line-height:16px;letter-spacing:.2px;-webkit-text-stroke:.5px #283242">INV-000726</div>
<div class="abs" style="left:465px;top:735.6500000000001px;width:66.5px;height:21px;border-radius:4px;background:#dcfce7;border:1px solid #86efac;color:#15803d;font-size:9px;font-weight:700;letter-spacing:.3px;line-height:19px;padding-top:.8px;text-align:center">FINALIZED</div>
<div class="abs" style="left:660.7px;top:740.0500000000001px;color:#10b981"><svg width="18" height="14" viewBox="0 0 18 14" style="display:block;"><ellipse cx="3.8" cy="1.3" rx="1.6" ry="1.15" fill="currentColor"/><ellipse cx="14.2" cy="1.3" rx="1.6" ry="1.15" fill="currentColor"/><rect x="6.4" y="3.4" width="5.2" height="5" rx=".5" fill="currentColor"/><path d="M3.2 5.4L6.4 8.6h5.2l3.2-3.2" fill="none" stroke="currentColor" stroke-width="2" stroke-linejoin="round"/><path d="M2.5 3.3C1.4 3.5 1.1 4.8 1.1 6.2v1.7c0 .9.6 1.6 1.5 2l1 .4v3.4h1.5V9.9c0-.7-.4-1.3-1-1.7l-.7-.5V4.6c0-.8-.3-1.3-.9-1.3z" fill="currentColor"/><path d="M15.5 3.3c1.1.2 1.4 1.5 1.4 2.9v1.7c0 .9-.6 1.6-1.5 2l-1 .4v3.4h-1.5V9.9c0-.7.4-1.3 1-1.7l.7-.5V4.6c0-.8.3-1.3.9-1.3z" fill="currentColor"/><path d="M1.4 10.4L.2 12.9l1.2.8 1.2-2.6z" fill="currentColor"/><path d="M16.6 10.4l1.2 2.5-1.2.8-1.2-2.6z" fill="currentColor"/></svg></div>
<div class="abs" style="left:721.5px;top:739.2500000000001px;font-size:11.55px;color:#374151;line-height:16px;letter-spacing:0px">David Garzon</div>
<div class="abs" style="left:885.2px;top:739.2500000000001px;font-size:11.3px;color:#374151;line-height:16px;letter-spacing:0.2px">$304.50</div>
<div class="abs" style="left:968.3px;top:739.2500000000001px;font-size:11.3px;color:#374151;line-height:16px;letter-spacing:0.42px">2025-07-18</div>
<div class="abs" style="left:1066.6px;top:739.2500000000001px;font-size:11.45px;color:#374151;line-height:16px;letter-spacing:0px">Finalized</div>
<div class="abs" style="left:1162px;top:734.8500000000001px;width:42px;height:23px;background:#eff6ff;border:1px solid #93c5fd;color:#1d4ed8;font-size:9.5px;line-height:21.5px;text-align:center;border-radius:1px">View</div>
<div class="abs" style="left:384.5px;top:769.4px;width:867.5px;height:45.9px;background:#f9fafb;border-top:1px solid #edf0f4"></div>
<div class="abs" style="left:396.5px;top:784.85px;font-size:12.1px;font-weight:400;color:#283242;line-height:16px;letter-spacing:.2px;-webkit-text-stroke:.5px #283242">INV-000725</div>
<div class="abs" style="left:465px;top:781.5500000000001px;width:66.5px;height:21px;border-radius:4px;background:#dcfce7;border:1px solid #86efac;color:#15803d;font-size:9px;font-weight:700;letter-spacing:.3px;line-height:19px;padding-top:.8px;text-align:center">FINALIZED</div>
<div class="abs" style="left:535.2px;top:781.5500000000001px;width:66.5px;height:21px;border-radius:4px;background:#dbeafe;border:1px solid #93c5fd;color:#1d4ed8;font-size:9px;font-weight:700;letter-spacing:.3px;line-height:19px;padding-top:.8px;text-align:center">FINANCED</div>
<div class="abs" style="left:660.7px;top:785.95px;color:#10b981"><svg width="18" height="14" viewBox="0 0 18 14" style="display:block;"><ellipse cx="3.8" cy="1.3" rx="1.6" ry="1.15" fill="currentColor"/><ellipse cx="14.2" cy="1.3" rx="1.6" ry="1.15" fill="currentColor"/><rect x="6.4" y="3.4" width="5.2" height="5" rx=".5" fill="currentColor"/><path d="M3.2 5.4L6.4 8.6h5.2l3.2-3.2" fill="none" stroke="currentColor" stroke-width="2" stroke-linejoin="round"/><path d="M2.5 3.3C1.4 3.5 1.1 4.8 1.1 6.2v1.7c0 .9.6 1.6 1.5 2l1 .4v3.4h1.5V9.9c0-.7-.4-1.3-1-1.7l-.7-.5V4.6c0-.8-.3-1.3-.9-1.3z" fill="currentColor"/><path d="M15.5 3.3c1.1.2 1.4 1.5 1.4 2.9v1.7c0 .9-.6 1.6-1.5 2l-1 .4v3.4h-1.5V9.9c0-.7.4-1.3 1-1.7l.7-.5V4.6c0-.8.3-1.3.9-1.3z" fill="currentColor"/><path d="M1.4 10.4L.2 12.9l1.2.8 1.2-2.6z" fill="currentColor"/><path d="M16.6 10.4l1.2 2.5-1.2.8-1.2-2.6z" fill="currentColor"/></svg></div>
<div class="abs" style="left:721.5px;top:785.1500000000001px;font-size:11.55px;color:#374151;line-height:16px;letter-spacing:0px">Tio Robles</div>
<div class="abs" style="left:885.2px;top:785.1500000000001px;font-size:11.3px;color:#374151;line-height:16px;letter-spacing:0.2px">$2175.00</div>
<div class="abs" style="left:968.3px;top:785.1500000000001px;font-size:11.3px;color:#374151;line-height:16px;letter-spacing:0.42px">2025-07-17</div>
<div class="abs" style="left:1066.6px;top:785.1500000000001px;font-size:11.45px;color:#374151;line-height:16px;letter-spacing:0px">Finalized</div>
<div class="abs" style="left:1162px;top:780.7500000000001px;width:42px;height:23px;background:#eff6ff;border:1px solid #93c5fd;color:#1d4ed8;font-size:9.5px;line-height:21.5px;text-align:center;border-radius:1px">View</div>
<div class="abs" style="left:384.5px;top:815.3px;width:867.5px;height:46.2px;background:#fff;border-top:1px solid #edf0f4"></div>
<div class="abs" style="left:396.5px;top:830.9px;font-size:12.1px;font-weight:400;color:#283242;line-height:16px;letter-spacing:.2px;-webkit-text-stroke:.5px #283242">INV-000724</div>
<div class="abs" style="left:465px;top:827.6px;width:66.5px;height:21px;border-radius:4px;background:#dcfce7;border:1px solid #86efac;color:#15803d;font-size:9px;font-weight:700;letter-spacing:.3px;line-height:19px;padding-top:.8px;text-align:center">FINALIZED</div>
<div class="abs" style="left:660.7px;top:832.0px;color:#10b981"><svg width="18" height="14" viewBox="0 0 18 14" style="display:block;"><ellipse cx="3.8" cy="1.3" rx="1.6" ry="1.15" fill="currentColor"/><ellipse cx="14.2" cy="1.3" rx="1.6" ry="1.15" fill="currentColor"/><rect x="6.4" y="3.4" width="5.2" height="5" rx=".5" fill="currentColor"/><path d="M3.2 5.4L6.4 8.6h5.2l3.2-3.2" fill="none" stroke="currentColor" stroke-width="2" stroke-linejoin="round"/><path d="M2.5 3.3C1.4 3.5 1.1 4.8 1.1 6.2v1.7c0 .9.6 1.6 1.5 2l1 .4v3.4h1.5V9.9c0-.7-.4-1.3-1-1.7l-.7-.5V4.6c0-.8-.3-1.3-.9-1.3z" fill="currentColor"/><path d="M15.5 3.3c1.1.2 1.4 1.5 1.4 2.9v1.7c0 .9-.6 1.6-1.5 2l-1 .4v3.4h-1.5V9.9c0-.7.4-1.3 1-1.7l.7-.5V4.6c0-.8.3-1.3.9-1.3z" fill="currentColor"/><path d="M1.4 10.4L.2 12.9l1.2.8 1.2-2.6z" fill="currentColor"/><path d="M16.6 10.4l1.2 2.5-1.2.8-1.2-2.6z" fill="currentColor"/></svg></div>
<div class="abs" style="left:721.5px;top:831.2px;font-size:11.55px;color:#374151;line-height:16px;letter-spacing:0px">Juan Carlos</div>
<div class="abs" style="left:885.2px;top:831.2px;font-size:11.3px;color:#374151;line-height:16px;letter-spacing:0.2px">$892.84</div>
<div class="abs" style="left:968.3px;top:831.2px;font-size:11.3px;color:#374151;line-height:16px;letter-spacing:0.42px">2025-07-17</div>
<div class="abs" style="left:1066.6px;top:831.2px;font-size:11.45px;color:#374151;line-height:16px;letter-spacing:0px">Finalized</div>
<div class="abs" style="left:1162px;top:826.8000000000001px;width:42px;height:23px;background:#eff6ff;border:1px solid #93c5fd;color:#1d4ed8;font-size:9.5px;line-height:21.5px;text-align:center;border-radius:1px">View</div>
<div class="abs" style="left:384.5px;top:861.5px;width:867.5px;height:45.9px;background:#f9fafb;border-top:1px solid #edf0f4"></div>
<div class="abs" style="left:396.5px;top:876.95px;font-size:12.1px;font-weight:400;color:#283242;line-height:16px;letter-spacing:.2px;-webkit-text-stroke:.5px #283242">INV-000723</div>
<div class="abs" style="left:465px;top:873.6500000000001px;width:66.5px;height:21px;border-radius:4px;background:#dcfce7;border:1px solid #86efac;color:#15803d;font-size:9px;font-weight:700;letter-spacing:.3px;line-height:19px;padding-top:.8px;text-align:center">FINALIZED</div>
<div class="abs" style="left:660.7px;top:878.0500000000001px;color:#10b981"><svg width="18" height="14" viewBox="0 0 18 14" style="display:block;"><ellipse cx="3.8" cy="1.3" rx="1.6" ry="1.15" fill="currentColor"/><ellipse cx="14.2" cy="1.3" rx="1.6" ry="1.15" fill="currentColor"/><rect x="6.4" y="3.4" width="5.2" height="5" rx=".5" fill="currentColor"/><path d="M3.2 5.4L6.4 8.6h5.2l3.2-3.2" fill="none" stroke="currentColor" stroke-width="2" stroke-linejoin="round"/><path d="M2.5 3.3C1.4 3.5 1.1 4.8 1.1 6.2v1.7c0 .9.6 1.6 1.5 2l1 .4v3.4h1.5V9.9c0-.7-.4-1.3-1-1.7l-.7-.5V4.6c0-.8-.3-1.3-.9-1.3z" fill="currentColor"/><path d="M15.5 3.3c1.1.2 1.4 1.5 1.4 2.9v1.7c0 .9-.6 1.6-1.5 2l-1 .4v3.4h-1.5V9.9c0-.7.4-1.3 1-1.7l.7-.5V4.6c0-.8.3-1.3.9-1.3z" fill="currentColor"/><path d="M1.4 10.4L.2 12.9l1.2.8 1.2-2.6z" fill="currentColor"/><path d="M16.6 10.4l1.2 2.5-1.2.8-1.2-2.6z" fill="currentColor"/></svg></div>
<div class="abs" style="left:721.5px;top:877.2500000000001px;font-size:11.55px;color:#374151;line-height:16px;letter-spacing:0px">John Smith</div>
<div class="abs" style="left:885.2px;top:877.2500000000001px;font-size:11.3px;color:#374151;line-height:16px;letter-spacing:0.2px">$467.63</div>
<div class="abs" style="left:968.3px;top:877.2500000000001px;font-size:11.3px;color:#374151;line-height:16px;letter-spacing:0.42px">2025-07-17</div>
<div class="abs" style="left:1066.6px;top:877.2500000000001px;font-size:11.45px;color:#374151;line-height:16px;letter-spacing:0px">Finalized</div>
<div class="abs" style="left:1162px;top:872.8500000000001px;width:42px;height:23px;background:#eff6ff;border:1px solid #93c5fd;color:#1d4ed8;font-size:9.5px;line-height:21.5px;text-align:center;border-radius:1px">View</div>
<div class="abs" style="left:384.5px;top:907.4px;width:867.5px;height:46.0px;background:#fff;border-top:1px solid #edf0f4"></div>
<div class="abs" style="left:396.5px;top:922.9px;font-size:12.1px;font-weight:400;color:#283242;line-height:16px;letter-spacing:.2px;-webkit-text-stroke:.5px #283242">INV-000722</div>
<div class="abs" style="left:465px;top:919.6px;width:81px;height:21px;border-radius:4px;background:#fee2e2;border:1px solid #fca5a5;color:#b91c1c;font-size:9px;font-weight:700;letter-spacing:.3px;line-height:19px;padding-top:.8px;text-align:center">UNFINALIZED</div>
<div class="abs" style="left:660.7px;top:924.0px;color:#10b981"><svg width="18" height="14" viewBox="0 0 18 14" style="display:block;"><ellipse cx="3.8" cy="1.3" rx="1.6" ry="1.15" fill="currentColor"/><ellipse cx="14.2" cy="1.3" rx="1.6" ry="1.15" fill="currentColor"/><rect x="6.4" y="3.4" width="5.2" height="5" rx=".5" fill="currentColor"/><path d="M3.2 5.4L6.4 8.6h5.2l3.2-3.2" fill="none" stroke="currentColor" stroke-width="2" stroke-linejoin="round"/><path d="M2.5 3.3C1.4 3.5 1.1 4.8 1.1 6.2v1.7c0 .9.6 1.6 1.5 2l1 .4v3.4h1.5V9.9c0-.7-.4-1.3-1-1.7l-.7-.5V4.6c0-.8-.3-1.3-.9-1.3z" fill="currentColor"/><path d="M15.5 3.3c1.1.2 1.4 1.5 1.4 2.9v1.7c0 .9-.6 1.6-1.5 2l-1 .4v3.4h-1.5V9.9c0-.7.4-1.3 1-1.7l.7-.5V4.6c0-.8.3-1.3.9-1.3z" fill="currentColor"/><path d="M1.4 10.4L.2 12.9l1.2.8 1.2-2.6z" fill="currentColor"/><path d="M16.6 10.4l1.2 2.5-1.2.8-1.2-2.6z" fill="currentColor"/></svg></div>
<div class="abs" style="left:721.5px;top:923.2px;font-size:11.55px;color:#374151;line-height:16px;letter-spacing:0px">Ricardo Tijeras</div>
<div class="abs" style="left:885.2px;top:923.2px;font-size:11.3px;color:#374151;line-height:16px;letter-spacing:0.2px">$27.19</div>
<div class="abs" style="left:968.3px;top:923.2px;font-size:11.3px;color:#374151;line-height:16px;letter-spacing:0.42px">2025-07-17</div>
<div class="abs" style="left:1066.6px;top:923.2px;font-size:11.45px;color:#374151;line-height:16px;letter-spacing:0px">In Progress</div>
<div class="abs" style="left:1162px;top:918.8000000000001px;width:59px;height:23px;background:#f0fdf4;border:1px solid #86efac;color:#15803d;font-size:9.5px;line-height:21.5px;text-align:center;border-radius:1px">Continue</div>
<div class="abs" style="left:1285.5px;top:410px;width:449px;height:560px;border-radius:9px;background:#fff;border:1px solid #e6e8ec;box-shadow:0 1px 3px rgba(15,23,42,.05)"></div>
<div class="abs" style="left:1302.4px;top:426px;font-size:11px;font-weight:400;letter-spacing:.26px;color:#1f2a3a;line-height:16px;-webkit-text-stroke:.45px #1f2a3a">TRANSFER REQUESTS</div>
<div class="abs" style="left:1302.2px;top:442.4px;width:415.5px;height:150px;border-radius:8px;background:#f8fafc;border:1px solid #e2e8f0"></div>
<div class="abs" style="left:1319.5px;top:458.4px;font-size:11.4px;font-weight:700;color:#1f2937;line-height:16px">Transfer #36</div>
<div class="abs" style="left:1318.6px;top:483.9px;color:#5f6f86"><svg width="10.2" height="10.2" viewBox="0 0 512 512" style="display:block;"><path d="M32 96l320 0V32c0-12.9 7.8-24.6 19.8-29.6s25.7-2.2 34.9 6.9l96 96c6 6 9.4 14.1 9.4 22.6s-3.4 16.6-9.4 22.6l-96 96c-9.200 9.2-22.9 11.9-34.9 6.9s-19.8-16.6-19.8-29.6V160L32 160c-17.7 0-32-14.3-32-32s14.3-32 32-32zM480 352c17.7 0 32 14.3 32 32s-14.3 32-32 32H160v64c0 12.9-7.8 24.6-19.8 29.6s-25.7 2.2-34.9-6.9l-96-96c-6-6-9.4-14.1-9.4-22.6s3.4-16.6 9.4-22.6l96-96c9.2-9.2 22.9-11.9 34.9-6.9s19.8 16.6 19.8 29.6l0 64H480z" fill="currentColor"/></svg></div>
<div class="abs" style="left:1332.2px;top:483.7px;font-size:10.3px;color:#64748b;line-height:14px;white-space:nowrap">Orange <svg width="9" height="6" viewBox="0 0 9 6" style="display:inline-block;vertical-align:middle;margin:0 1px"><path d="M0 3h7" stroke="#475569" stroke-width="1.1"/><path d="M6 1l3 2-3 2z" fill="#475569"/></svg> Belgrave</div>
<div class="abs" style="left:1319.2px;top:504.4px;width:75px;height:22.5px;border-radius:4px;background:#fef3c7;border:1px solid #fcd34d;color:#92400e;font-size:8.9px;font-weight:700;letter-spacing:.4px;line-height:20.5px;text-align:center">REQUESTED</div>
<div class="abs" style="left:1319.4px;top:551.4px;width:381.5px;height:24px;border-radius:4px;background:#eff6ff;border:1px solid #dbe4f0;color:#1e40af;font-size:9.5px;font-weight:700;line-height:22px;text-align:center">View Transfer</div>
<div class="abs" style="left:1302.2px;top:604.4px;width:415.5px;height:150px;border-radius:8px;background:#f8fafc;border:1px solid #e2e8f0"></div>
<div class="abs" style="left:1319.5px;top:620.4px;font-size:11.4px;font-weight:700;color:#1f2937;line-height:16px">Transfer #34</div>
<div class="abs" style="left:1318.6px;top:645.9px;color:#5f6f86"><svg width="10.2" height="10.2" viewBox="0 0 512 512" style="display:block;"><path d="M32 96l320 0V32c0-12.9 7.8-24.6 19.8-29.6s25.7-2.2 34.9 6.9l96 96c6 6 9.4 14.1 9.4 22.6s-3.4 16.6-9.4 22.6l-96 96c-9.200 9.2-22.9 11.9-34.9 6.9s-19.8-16.6-19.8-29.6V160L32 160c-17.7 0-32-14.3-32-32s14.3-32 32-32zM480 352c17.7 0 32 14.3 32 32s-14.3 32-32 32H160v64c0 12.9-7.8 24.6-19.8 29.6s-25.7 2.2-34.9-6.9l-96-96c-6-6-9.4-14.1-9.4-22.6s3.4-16.6 9.4-22.6l96-96c9.2-9.2 22.9-11.9 34.9-6.9s19.8 16.6 19.8 29.6l0 64H480z" fill="currentColor"/></svg></div>
<div class="abs" style="left:1332.2px;top:645.6999999999999px;font-size:10.3px;color:#64748b;line-height:14px;white-space:nowrap">Orange <svg width="9" height="6" viewBox="0 0 9 6" style="display:inline-block;vertical-align:middle;margin:0 1px"><path d="M0 3h7" stroke="#475569" stroke-width="1.1"/><path d="M6 1l3 2-3 2z" fill="#475569"/></svg> Pomona</div>
<div class="abs" style="left:1319.2px;top:666.4px;width:75px;height:22.5px;border-radius:4px;background:#fef3c7;border:1px solid #fcd34d;color:#92400e;font-size:8.9px;font-weight:700;letter-spacing:.4px;line-height:20.5px;text-align:center">REQUESTED</div>
<div class="abs" style="left:1319.4px;top:713.4px;width:381.5px;height:24px;border-radius:4px;background:#eff6ff;border:1px solid #dbe4f0;color:#1e40af;font-size:9.5px;font-weight:700;line-height:22px;text-align:center">View Transfer</div>
<div class="abs" style="left:1302.2px;top:766.4px;width:415.5px;height:150px;border-radius:8px;background:#f8fafc;border:1px solid #e2e8f0"></div>
<div class="abs" style="left:1319.5px;top:782.4px;font-size:11.4px;font-weight:700;color:#1f2937;line-height:16px">Transfer #12</div>
<div class="abs" style="left:1318.6px;top:807.9px;color:#5f6f86"><svg width="10.2" height="10.2" viewBox="0 0 512 512" style="display:block;"><path d="M32 96l320 0V32c0-12.9 7.8-24.6 19.8-29.6s25.7-2.2 34.9 6.9l96 96c6 6 9.4 14.1 9.4 22.6s-3.4 16.6-9.4 22.6l-96 96c-9.200 9.2-22.9 11.9-34.9 6.9s-19.8-16.6-19.8-29.6V160L32 160c-17.7 0-32-14.3-32-32s14.3-32 32-32zM480 352c17.7 0 32 14.3 32 32s-14.3 32-32 32H160v64c0 12.9-7.8 24.6-19.8 29.6s-25.7 2.2-34.9-6.9l-96-96c-6-6-9.4-14.1-9.4-22.6s3.4-16.6 9.4-22.6l96-96c9.2-9.2 22.9-11.9 34.9-6.9s19.8 16.6 19.8 29.6l0 64H480z" fill="currentColor"/></svg></div>
<div class="abs" style="left:1332.2px;top:807.6999999999999px;font-size:10.3px;color:#64748b;line-height:14px;white-space:nowrap">Pomona <svg width="9" height="6" viewBox="0 0 9 6" style="display:inline-block;vertical-align:middle;margin:0 1px"><path d="M0 3h7" stroke="#475569" stroke-width="1.1"/><path d="M6 1l3 2-3 2z" fill="#475569"/></svg> Orange</div>
<div class="abs" style="left:1319.2px;top:828.4px;width:77px;height:22.5px;border-radius:4px;background:#dcfce7;border:1px solid #86efac;color:#166534;font-size:8.9px;font-weight:700;letter-spacing:.4px;line-height:20.5px;text-align:center">COMPLETED</div>
<div class="abs" style="left:1319.4px;top:875.4px;width:381.5px;height:24px;border-radius:4px;background:#eff6ff;border:1px solid #dbe4f0;color:#1e40af;font-size:9.5px;font-weight:700;line-height:22px;text-align:center">View Transfer</div>
<div class="abs" style="left:1302.2px;top:928.4px;width:415.5px;height:150px;border-radius:8px;background:#f8fafc;border:1px solid #e2e8f0"></div>
<div class="abs" style="left:1905px;top:0;width:3px;height:947px;background:#fbfbfb"></div>
<div class="abs" style="left:1906.6px;top:17px;width:1.4px;height:620px;background:#7d7d7d"></div><div class="abs" style="left:1906.8px;top:6.8px;width:1.2px;height:1.2px;background:#888"></div>
</body></html>
